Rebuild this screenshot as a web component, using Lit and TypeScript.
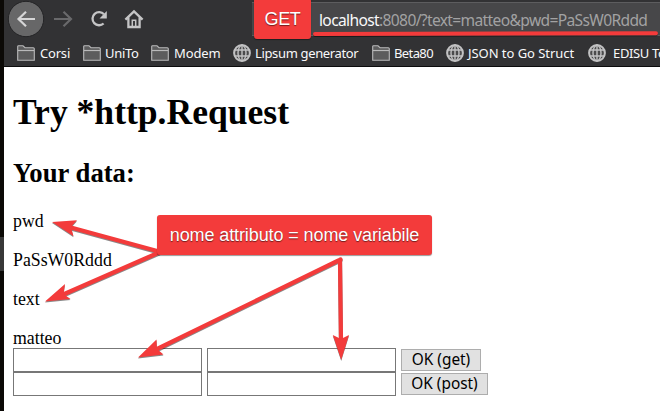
import { LitElement, html, css, svg } from "lit";
import { customElement } from "lit/decorators.js";
import { styleMap } from "lit/directives/style-map.js";

interface Bookmark {
  label: string;
  kind: "folder" | "globe";
  width: number;
  gap: number;
  spacing: number;
}

const BOOKMARKS: Bookmark[] = [
  { label: "Corsi", kind: "folder", width: 66, gap: 5, spacing: -0.2 },
  { label: "UniTo", kind: "folder", width: 68, gap: 4, spacing: -0.3 },
  { label: "Modem", kind: "folder", width: 82, gap: 5, spacing: -0.1 },
  { label: "Lipsum generator", kind: "globe", width: 139, gap: 4, spacing: -0.35 },
  { label: "Beta80", kind: "folder", width: 74, gap: 4, spacing: -0.6 },
  { label: "JSON to Go Struct", kind: "globe", width: 142, gap: 4, spacing: -0.05 },
  { label: "EDISU To", kind: "globe", width: 72, gap: 7, spacing: -0.35 },
];

const folderIcon = svg`<path d="M.7 15.3V1.6Q.7.8 1.5.8H6L8 2.7H16.3Q17.3 2.7 17.3 3.7V15.3Z" fill="#5c5c5d" stroke="#b9b9ba" stroke-width="1.1"/><path d="M1 5.5H17" stroke="#b9b9ba" stroke-width="1.2"/>`;
const globeIcon = svg`<g fill="none" stroke="#c2c2c3" stroke-width="1.4"><circle cx="9" cy="9" r="7.9" fill="#4b4b4c" stroke-width="2"/><ellipse cx="9" cy="9" rx="4" ry="7.8"/><path d="M9 1V17M1.5 6H16.5M1.5 12H16.5"/></g>`;

@customElement("app-root")
export class AppRoot extends LitElement {
  static styles = css`
    :host { display: flex; position: relative; width: 660px; height: 411px; overflow: hidden; background: #fff; }
    .edge { width: 4px; flex: none; background: #0b0906; display: flex; flex-direction: column; }
    .edge i { height: 34px; margin-top: 237px; background: #383838; }
    .window { flex: 1; min-width: 0; display: flex; flex-direction: column; }
    .chrome { height: 67px; box-sizing: border-box; background: #323234; border-bottom: 1px solid #0c0c0d; overflow: hidden; flex: none; }
    .toolbar { height: 38px; display: flex; }
    .nav { width: 140px; height: 38px; flex: none; }
    .address { margin-left: 108px; flex: 1; height: 34px; margin-top: 2px; box-sizing: border-box; border-top: 1px solid #5d5d5f; border-bottom: 1px solid #5d5d5f; background: #474749; padding-left: 67px; font: 15.6px/34px "Noto Sans", sans-serif; letter-spacing: -0.65px; color: #a2a2a3; white-space: nowrap; }
    .address b { font-weight: 400; color: #f9f9fa; }
    .bookmarks { display: flex; height: 30px; padding-left: 13px; align-items: center; }
    .bookmark { display: flex; flex: none; align-items: center; height: 30px; color: #f9f9fa; font: 13px/30px "Noto Sans", sans-serif; white-space: nowrap; }
    .bookmark svg { width: 18px; height: 18px; flex: none; }
    .page { padding: 25px 9px 0; font: 17.8px/20px "Liberation Serif", serif; color: #000; }
    h1, h2, p { margin: 0; }
    h1 { font-size: 35.6px; line-height: 40px; }
    h2 { font-size: 26.7px; line-height: 30px; margin: 26px 0 23px; }
    p + p { margin-top: 19px; }
    .row { display: flex; gap: 5px; height: 24px; align-items: center; }
    .row input { width: 189px; height: 24px; box-sizing: border-box; border: 1px solid #777; margin: 0; padding: 1px; background: #fff; border-radius: 0; }
    .row button { height: 22px; box-sizing: border-box; border: 1px solid #adadad; background: #e1e1e1; color: #000; padding: 0; font: 15.4px/20px "Noto Sans", sans-serif; border-radius: 0; }
    .get { width: 80px; }
    .post { width: 87px; }
    .tag { position: absolute; background: #f33b3b; color: #fff; border-radius: 3px; text-align: center; font-family: "Liberation Sans", sans-serif; text-shadow: 0 1px 1px #0008; box-shadow: 0 1px 1px #0006; white-space: nowrap; }
    .method { left: 254px; top: -2px; width: 57px; height: 41px; font-size: 18px; line-height: 43px; letter-spacing: -0.3px; }
    .note { left: 157px; top: 215px; width: 275px; height: 40px; font-size: 18px; line-height: 41px; letter-spacing: -0.1px; }
    .arrows { position: absolute; left: 0; top: 0; filter: drop-shadow(0 1px 0.6px #0007); }
  `;

  render() {
    return html`
      <div class="edge"><i></i></div>
      <div class="window">
        <div class="chrome">
          <div class="toolbar">
            <svg class="nav" viewBox="4 0 140 38" fill="none">
              <circle cx="26" cy="19" r="17.7" fill="#676768" stroke="#242426" />
              <path d="M35 19H18M26 11.7L18.5 19L26 26.3" stroke="#d5d5d6" stroke-width="2.2" />
              <path d="M54 19H71M63.5 11.7L71 19L63.5 26.3" stroke="#69696b" stroke-width="2.2" />
              <path d="M104 14.2A6.6 6.6 0 1 0 103.6 23.5" stroke="#c5c5c6" stroke-width="2.3" />
              <path d="M106.8 11V18.4H99.5Z" fill="#c5c5c6" />
              <path d="M125.4 19.6L134 11.4L142.6 19.6M128.4 17.5V27H139.6V17.5" stroke="#c5c5c6" stroke-width="2.3" />
              <path d="M132.3 27V20.3H135.7V27" stroke="#c5c5c6" stroke-width="1.5" />
            </svg>
            <div class="address"><b>localhost</b>:8080/?text=matteo&amp;pwd=PaSsW0Rddd</div>
          </div>
          <div class="bookmarks">
            ${BOOKMARKS.map(
              (b) => html`<div class="bookmark" style=${styleMap({ width: `${b.width}px`, gap: `${b.gap}px`, letterSpacing: `${b.spacing}px` })}>
                <svg viewBox=${b.kind === "folder" ? "0 -1 18 18" : "0 0 18 18"}>${b.kind === "folder" ? folderIcon : globeIcon}</svg><span>${b.label}</span>
              </div>`
            )}
          </div>
        </div>
        <main class="page">
          <h1>Try *http.Request</h1>
          <h2>Your data:</h2>
          <p>pwd</p>
          <p>PaSsW0Rddd</p>
          <p>text</p>
          <p>matteo</p>
          <div class="row"><input /><input /><button class="get">OK (get)</button></div>
          <div class="row"><input /><input /><button class="post">OK (post)</button></div>
        </main>
      </div>
      <svg class="arrows" width="660" height="411" fill="#f33b3b" stroke="#f33b3b">
        <path d="M315 34L656 33.3" stroke-width="4" stroke-linecap="round" />
        <path d="M159 251.5L70 227.3M159 252.5L62 295M340.5 259.5L155 350M340 259.5L341 342" stroke-width="4.2" fill="none" stroke-linecap="round" />
        <path stroke="none" d="M52 222L77 220.3L71 227L73.5 236.3ZM45 301.5L65 284L63.5 294L70.5 299ZM138 357.5L156.5 339.5L157 349L163.5 354.5ZM341.2 360L332.8 335L341 339L349 335Z" />
      </svg>
      <div class="tag method">GET</div>
      <div class="tag note">nome attributo = nome variabile</div>
    `;
  }
}
